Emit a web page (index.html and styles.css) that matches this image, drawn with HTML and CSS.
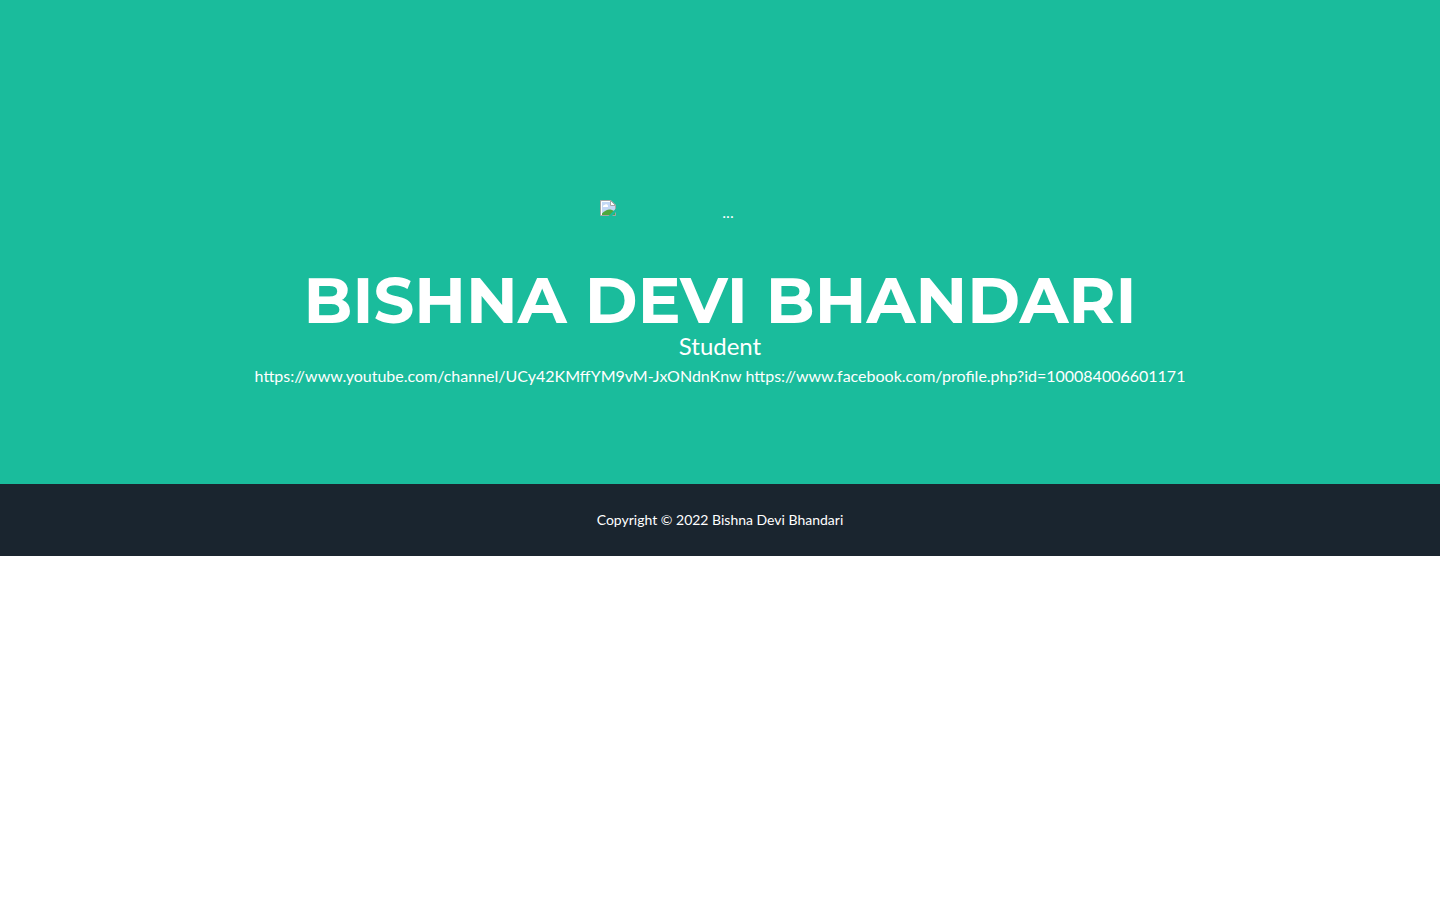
FILE: index.html
```html
<!DOCTYPE html>
<html lang="en">
<head>
<meta charset="utf-8">
<meta name="viewport" content="width=device-width, initial-scale=1">
<title>Bishna Devi Bhandari</title>
<link rel="stylesheet" href="styles.css">
</head>
<body>
<header class="masthead">
  <div class="avatar">
    <svg class="avatar-icon" width="16" height="16" viewBox="0 0 16 16" aria-hidden="true">
      <path d="M0.5 0.5H11L15.5 5V15.5H0.5Z" fill="#c3d8f5" stroke="#a5a5a5"/>
      <path d="M1.5 15V1.5H10.500" fill="none" stroke="#fff"/>
      <path d="M2 15V13.500C4 11.500 6 10 9 9.500C11 9.500 13 10 15 12V15Z" fill="#4fa83d"/>
      <path d="M3 7A1.500 1.500 0 0 1 4.500 5A2 2 0 0 1 8 6V7Z" fill="#fff"/>
      <path d="M10.500 0.500V5.500H15.500Z" fill="#fff" stroke="#a5a5a5"/>
      <path d="M16 8.500L8.500 16H12L16 12Z" fill="#1abc9c"/>
    </svg>
    <span class="avatar-alt">...</span>
  </div>
  <h1 class="name">Bishna Devi Bhandari</h1>
  <p class="role">Student</p>
  <p class="links">https://www.youtube.com/channel/UCy42KMffYM9vM-JxONdnKnw https://www.facebook.com/profile.php?id=100084006601171</p>
</header>
<footer class="copyright"><small class="copyright-text">Copyright © 2022 Bishna Devi Bhandari</small></footer>
</body>
</html>
```
FILE: styles.css
```css
* { box-sizing: border-box; }
body { margin: 0; background: #fff; color: #fff; font-family: Lato, sans-serif; font-size: 16px; line-height: 24px; }
.masthead { display: flex; flex-direction: column; align-items: center; padding: 200px 24px 96px; background: #1abc9c; text-align: center; }
.avatar { display: flex; width: 240px; height: 24px; margin-bottom: 44px; }
.avatar-icon { flex: none; }
.avatar-alt { flex: 1; }
.name { margin: 0; font-family: Montserrat, Inter, sans-serif; font-size: 64px; font-weight: 700; line-height: 64px; text-transform: uppercase; }
.role { margin: 0 0 4px; font-size: 24px; line-height: 28px; }
.links { margin: 0; overflow-wrap: anywhere; }
.copyright { padding: 24px; background: #1a252f; text-align: center; }
.copyright-text { display: block; font-size: 14px; }
```
